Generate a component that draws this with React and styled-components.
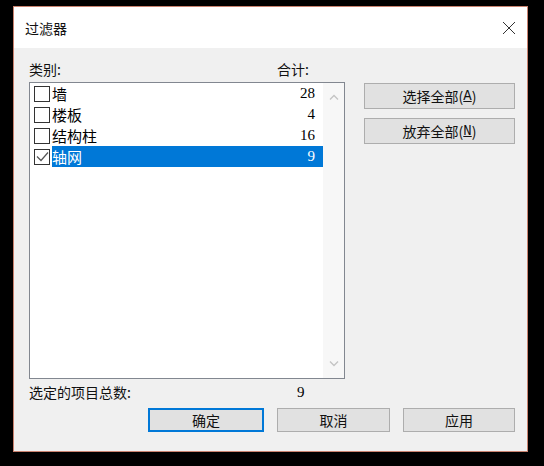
import React, { useState } from 'react'
import styled, { createGlobalStyle } from 'styled-components'

const GlobalStyle = createGlobalStyle`
  html, body {
    margin: 0;
    padding: 0;
    background: #000;
  }
  body {
    width: 544px;
    height: 466px;
    overflow: hidden;
    font-family: "Noto Sans CJK SC", "Liberation Sans", sans-serif;
  }
`

const items = [
  { name: '墙', count: 28, checked: false },
  { name: '楼板', count: 4, checked: false },
  { name: '结构柱', count: 16, checked: false },
  { name: '轴网', count: 9, checked: true },
]

export default function App() {
  const [rows, setRows] = useState(items)
  const [selected, setSelected] = useState(3)

  const toggle = (i) => {
    setRows(prev => prev.map((r, idx) => idx === i ? { ...r, checked: !r.checked } : r))
  }
  const setAll = (v) => setRows(prev => prev.map(r => ({ ...r, checked: v })))
  const total = rows.filter(r => r.checked).reduce((s, r) => s + r.count, 0)

  return (
    <>
      <GlobalStyle />
      <Page>
        <Dialog>
          <TitleBar>
            <Title>过滤器</Title>
            <CloseButton aria-label="close">
              <svg width="14" height="14" viewBox="0 0 14 14">
                <path d="M1 1 L13 13 M13 1 L1 13" stroke="#333" strokeWidth="1" fill="none" />
              </svg>
            </CloseButton>
          </TitleBar>
          <Body>
            <Top>
              <ListColumn>
                <HeaderRow>
                  <Label>类别:</Label>
                  <Label>合计:</Label>
                </HeaderRow>
                <ListBox>
                  <Rows>
                    {rows.map((r, i) => (
                      <Row key={r.name} onClick={() => setSelected(i)}>
                        <Check checked={r.checked} onClick={() => toggle(i)}>
                          {r.checked && (
                            <svg width="13" height="11" viewBox="0 0 13 11">
                              <path d="M1 5.5 L5 9.5 L12 1.5" stroke="#555" strokeWidth="1.2" fill="none" />
                            </svg>
                          )}
                        </Check>
                        <RowBody active={selected === i}>
                          <Name>{r.name}</Name>
                          <Count>{r.count}</Count>
                        </RowBody>
                      </Row>
                    ))}
                  </Rows>
                  <ScrollBar>
                    <svg width="10" height="6" viewBox="0 0 10 6">
                      <path d="M1 5.5 L5 1.5 L9 5.5" stroke="#c4c4c4" strokeWidth="1.3" fill="none" />
                    </svg>
                    <svg width="10" height="6" viewBox="0 0 10 6">
                      <path d="M1 0.5 L5 4.5 L9 0.5" stroke="#c4c4c4" strokeWidth="1.3" fill="none" />
                    </svg>
                  </ScrollBar>
                </ListBox>
              </ListColumn>
              <SideButtons>
                <Button onClick={() => setAll(true)}>选择全部(<Key>A</Key>)</Button>
                <Button onClick={() => setAll(false)}>放弃全部(<Key>N</Key>)</Button>
              </SideButtons>
            </Top>
            <Summary>
              <Label>选定的项目总数:</Label>
              <SummaryValue>{total}</SummaryValue>
            </Summary>
            <Footer>
              <Button primary width={116}>确定</Button>
              <Button width={113}>取消</Button>
              <Button width={112}>应用</Button>
            </Footer>
          </Body>
        </Dialog>
      </Page>
    </>
  )
}

const Page = styled.div`
  padding: 6px 0 0 13px;
`

const Dialog = styled.div`
  width: 515px;
  height: 446px;
  box-sizing: border-box;
  border: 1px solid #c9826f;
  background: #f0f0f0;
  display: flex;
  flex-direction: column;
`

const TitleBar = styled.div`
  height: 41px;
  background: #fff;
  display: flex;
  align-items: center;
  justify-content: space-between;
  padding: 0 11px 0 11px;
`

const Title = styled.div`
  font-size: 14px;
  color: #111;
`

const CloseButton = styled.div`
  display: flex;
  align-items: center;
`

const Body = styled.div`
  flex: 1;
  padding: 7px 12px 0 15px;
  display: flex;
  flex-direction: column;
`

const Top = styled.div`
  display: flex;
  gap: 19px;
`

const ListColumn = styled.div`
  width: 316px;
  display: flex;
  flex-direction: column;
`

const HeaderRow = styled.div`
  display: flex;
  justify-content: space-between;
  padding-right: 36px;
  height: 27px;
  align-items: center;
`

const Label = styled.span`
  font-size: 14px;
  color: #111;
`

const ListBox = styled.div`
  height: 297px;
  box-sizing: border-box;
  border: 1px solid #828790;
  background: #fff;
  display: flex;
`

const Rows = styled.div`
  flex: 1;
  display: flex;
  flex-direction: column;
  padding-left: 4px;
`

const Row = styled.div`
  height: 21px;
  display: flex;
  align-items: center;
`

const Check = styled.div`
  width: 14px;
  height: 14px;
  border: 1px solid #333;
  background: #fff;
  display: flex;
  align-items: center;
  justify-content: center;
  margin-right: 2px;
  flex-shrink: 0;
`

const RowBody = styled.div`
  flex: 1;
  height: 100%;
  display: flex;
  align-items: center;
  justify-content: space-between;
  padding-right: 8px;
  background: ${p => (p.active ? '#0078d7' : 'transparent')};
  color: ${p => (p.active ? '#fff' : '#000')};
`

const Name = styled.span`
  font-size: 15px;
`

const Count = styled.span`
  font-family: "Liberation Serif", "DejaVu Serif", serif;
  font-size: 15px;
`

const ScrollBar = styled.div`
  width: 21px;
  background: #f7f7f7;
  display: flex;
  flex-direction: column;
  justify-content: space-between;
  align-items: center;
  padding: 11px 0 11px;
`

const SideButtons = styled.div`
  display: flex;
  flex-direction: column;
  gap: 9px;
  padding-top: 28px;
`

const Button = styled.button`
  width: ${p => (p.width ? `${p.width}px` : '151px')};
  height: ${p => (p.width ? '24px' : '26px')};
  box-sizing: border-box;
  background: #e1e1e1;
  border: ${p => (p.primary ? '2px solid #0078d7' : '1px solid #adadad')};
  font-family: "Noto Sans CJK SC", "Liberation Sans", sans-serif;
  font-size: 14px;
  color: #111;
  padding: 0;
  display: flex;
  align-items: center;
  justify-content: center;
  cursor: pointer;
`

const Key = styled.u`
  font-family: "Liberation Mono", monospace;
`

const Summary = styled.div`
  display: flex;
  align-items: center;
  height: 26px;
  margin-top: 0px;
`

const SummaryValue = styled.span`
  font-family: "Liberation Serif", serif;
  font-size: 15px;
  margin-left: 166px;
`

const Footer = styled.div`
  display: flex;
  justify-content: flex-end;
  gap: 13px;
  margin-top: 3px;
`
